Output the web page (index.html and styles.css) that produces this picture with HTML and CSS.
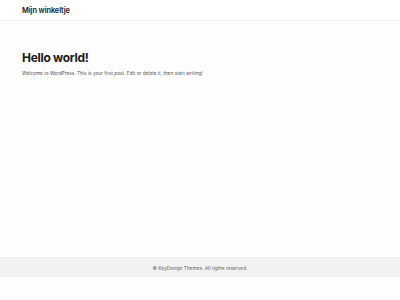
FILE: index.html
```html
<!DOCTYPE html>
<html lang="nl">
<head>
    <meta charset="UTF-8" />
    <meta name="viewport" content="width=device-width, initial-scale=1.0"/>
    <title>Mijn winkeltje</title>
    <link rel="stylesheet" href="styles.css">
</head>
<body>
    <header class="site-header">
        <a class="site-title" href="#">Mijn winkeltje</a>
    </header>

    <main class="site-content">
        <article class="post">
            <h1 class="post-title">Hello world!</h1>
            <p class="post-text">Welcome to WordPress. This is your first post. Edit or delete it, then start writing!</p>
        </article>
    </main>

    <footer class="site-footer">
        <p class="copyright">© KeyDesign Themes. All rights reserved.</p>
    </footer>
</body>
</html>
```

FILE: styles.css
```css
* {
    margin: 0;
    padding: 0;
    box-sizing: border-box;
}

body {
    font-family: Inter, "Noto Sans", sans-serif;
    background-color: #fdfdfd;
    color: #1a1a1a;
    height: 300px;
    display: flex;
    flex-direction: column;
}

.site-header {
    height: 21px;
    background-color: #ffffff;
    border-bottom: 1px solid #f1f1f1;
    display: flex;
    align-items: center;
    padding: 0 22px;
}

.site-title {
    font-size: 7.4px;
    font-weight: 600;
    color: #1a1a1a;
    text-decoration: none;
    letter-spacing: -0.1px;
}

.site-content {
    flex: 1;
    padding: 29px 22px 0;
}

.post-title {
    font-size: 12px;
    font-weight: 700;
    letter-spacing: -0.3px;
    line-height: 1.25;
    margin-bottom: 5px;
}

.post-text {
    font-size: 4.75px;
    color: #555;
}

.site-footer {
    height: 20px;
    margin-bottom: 23px;
    background-color: #f2f2f2;
    border-top: 1px solid #ececec;
    display: flex;
    align-items: center;
    justify-content: center;
}

.copyright {
    font-size: 4.8px;
    color: #666;
}
```
